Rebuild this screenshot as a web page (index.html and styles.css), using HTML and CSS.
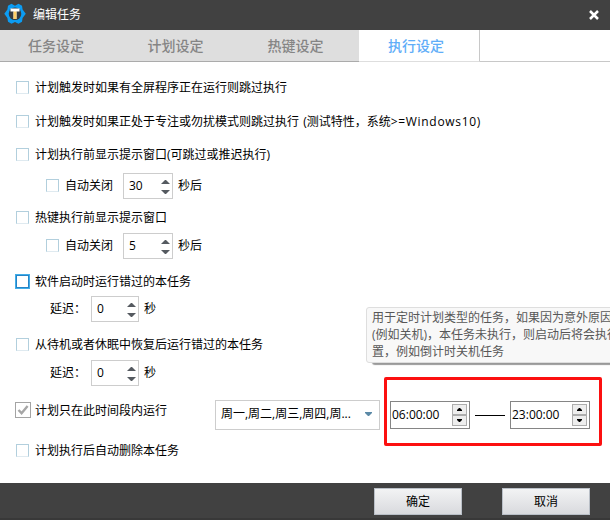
FILE: index.html
```html
<!DOCTYPE html>
<html lang="zh-CN">
<head>
<meta charset="utf-8">
<title>编辑任务</title>
<link rel="stylesheet" href="styles.css">
</head>
<body>
<div class="window">
  <header class="titlebar">
    <svg class="logo" width="22" height="22" viewBox="0 0 22 22">
      <path d="M11 2.8 L14.5 0.8 L18 2.8 L18.6 6.6 L21.8 10.7 L18.6 14.9 L18 18.7 L14.5 20.7 L11 19 L7.5 20.7 L4 18.7 L3.4 14.9 L0.3 10.7 L3.4 6.6 L4 2.8 L7.5 0.8Z" fill="#0c9cf2"/>
      <circle cx="11" cy="10.8" r="6.3" fill="#383b40"/>
      <path d="M6.5 5.5H15.5V8.5H12.5V16H9.5V8.5H6.5Z" fill="#fff"/>
      <path d="M9.5 8.5H12.5V16H9.5Z" fill="#ffce68"/>
    </svg>
    <h1>编辑任务</h1>
    <svg class="close" width="12" height="12" viewBox="0 0 12 12"><path d="M2 2L10 10M10 2L2 10" stroke="#fff" stroke-width="2.5"/></svg>
  </header>
  <nav class="tabs">
    <span class="tab first">任务设定</span><span class="tab">计划设定</span><span class="tab">热键设定</span><span class="tab active">执行设定</span>
  </nav>
  <main>
    <div class="row r1"><i class="box"></i><span>计划触发时如果有全屏程序正在运行则跳过执行</span></div>
    <div class="row r2"><i class="box"></i><span>计划触发时如果正处于专注或勿扰模式则跳过执行 <span class="note">(测试特性，系统<span class="version">&gt;=Windows10)</span></span></span></div>
    <div class="row r3"><i class="box"></i><span>计划执行前显示提示窗口(可跳过或推迟执行)</span></div>
    <div class="row sub r4"><i class="box"></i><span class="auto">自动关闭</span>
      <div class="spin"><span>30</span><svg width="9" height="16" viewBox="0 0 9 16"><path d="M0 5L4 1H5L9 5ZM0 11L4 15H5L9 11Z"/></svg></div><span>秒后</span></div>
    <div class="row r5"><i class="box"></i><span>热键执行前显示提示窗口</span></div>
    <div class="row sub r6"><i class="box"></i><span class="auto">自动关闭</span>
      <div class="spin"><span>5</span><svg width="9" height="16" viewBox="0 0 9 16"><path d="M0 5L4 1H5L9 5ZM0 11L4 15H5L9 11Z"/></svg></div><span>秒后</span></div>
    <div class="row r7"><i class="box focus"></i><span>软件启动时运行错过的本任务</span></div>
    <div class="row delay r8"><span class="lead">延迟：</span>
      <div class="spin small"><span>0</span><svg width="9" height="16" viewBox="0 0 9 16"><path d="M0 5L4 1H5L9 5ZM0 11L4 15H5L9 11Z"/></svg></div><span>秒</span></div>
    <div class="row r9"><i class="box"></i><span>从待机或者休眠中恢复后运行错过的本任务</span></div>
    <div class="row delay r10"><span class="lead">延迟：</span>
      <div class="spin small"><span>0</span><svg width="9" height="16" viewBox="0 0 9 16"><path d="M0 5L4 1H5L9 5ZM0 11L4 15H5L9 11Z"/></svg></div><span>秒</span></div>
    <div class="period">
      <div class="row period-label"><i class="box checked"><svg width="12" height="12" viewBox="0 0 12 12"><path d="M1.5 6L4.6 9.2L10.6 2" fill="none" stroke="#a6a6a6" stroke-width="2.4"/></svg></i><span>计划只在此时间段内运行</span></div>
      <div class="combo"><span>周一,周二,周三,周四,周...</span><svg width="7" height="4" viewBox="0 0 7 4"><path d="M0 0H7V1L4 4H3L0 1Z" fill="#5b89a6"/></svg></div>
      <div class="time"><span>06:00:00</span><div class="steps"><i><svg width="5" height="3" viewBox="0 0 5 3"><path d="M0 3V2L2 0H3L5 2V3Z"/></svg></i><i><svg width="5" height="3" viewBox="0 0 5 3"><path d="M0 0V1L2 3H3L5 1V0Z"/></svg></i></div></div>
      <div class="dash"></div>
      <div class="time"><span>23:00:00</span><div class="steps"><i><svg width="5" height="3" viewBox="0 0 5 3"><path d="M0 3V2L2 0H3L5 2V3Z"/></svg></i><i><svg width="5" height="3" viewBox="0 0 5 3"><path d="M0 0V1L2 3H3L5 1V0Z"/></svg></i></div></div>
    </div>
    <div class="row r12"><i class="box"></i><span>计划执行后自动删除本任务</span></div>
  </main>
  <footer><button>确定</button><button>取消</button></footer>
  <div class="tooltip">用于定时计划类型的任务，如果因为意外原因<br>(例如关机)，本任务未执行，则启动后将会执行<br>置，例如倒计时关机任务</div>
  <div class="highlight"></div>
</div>
</body>
</html>
```
FILE: styles.css
```css
* { box-sizing: border-box; }
body { margin: 0; font: 12px/18px "Open Sans", "Noto Sans CJK SC", sans-serif; color: #000; background: #fff; }
svg { display: block; flex: none; }
.window { position: relative; width: 610px; height: 520px; overflow: hidden; display: flex; flex-direction: column; white-space: nowrap; }
.titlebar { height: 30px; background: #414141; display: flex; align-items: center; padding: 0 10px 2px 4px; }
.titlebar h1 { margin: 1px 0 0 7px; font-size: 12px; font-weight: 400; color: #fff; }
.close { margin-left: auto; margin-top: 1px; }
.tabs { height: 32px; display: flex; border-bottom: 1px solid #c8c8c8; }
.tab { width: 120px; height: 32px; display: flex; align-items: center; justify-content: center; font-size: 14px; font-weight: 500; color: #858585; background: #dedede; border-bottom: 1px solid #ababab; padding-right: 7px; }
.tab.first { width: 119px; }
.tab.active { width: 121px; color: #60adf8; background: #fff; border-right: 1px solid #c8c8c8; border-bottom-color: #dedede; padding-right: 6px; }
main { flex: 1; padding-left: 16px; }
.row { height: 26px; display: flex; align-items: center; }
.r1 { margin-top: 13px; }
.r2 { margin-top: 8px; }
.r3 { margin-top: 7px; }
.r4 { margin-top: 5px; }
.r5 { margin-top: 6px; }
.r6 { margin-top: 2px; }
.r7 { margin-top: 10px; }
.r8 { margin-top: 1px; }
.r9 { margin-top: 10px; }
.r10 { margin-top: 2px; }
.r12 { margin-top: 8px; }
.sub { padding-left: 30px; }
.delay { padding-left: 34px; }
.note { margin-left: 1px; }
.version { letter-spacing: 0.7px; }
.box { flex: none; align-self: flex-start; width: 13px; height: 13px; margin: 6px 6px 0 0; border: 1px solid #b2cfdd; border-bottom-color: #dfeaf0; background: #fff; }
.box.focus { width: 15px; height: 15px; margin: 5px 5px 0 -1px; border: 1px solid #42aee8; box-shadow: inset 0 0 0 1px #2584c8; }
.box.checked { width: 16px; height: 16px; margin: 4px 4px 0 -1px; border: 1px solid #a4a4a4; padding: 1px; }
.auto { width: 58px; }
.lead { width: 41px; }
.spin { width: 50px; height: 26px; margin-right: 5px; padding: 1px 2px 0 5px; border: 1px solid #cdcdcd; display: flex; align-items: center; justify-content: space-between; fill: #555a60; }
.spin > span { margin-top: -1px; }
.spin.small { width: 48px; }
.period { margin-top: 12px; height: 32px; display: flex; align-items: flex-start; }
.period-label { width: 199px; }
.combo { width: 165px; height: 30px; margin: 2px 10px 0 0; padding: 0 7px 2px 5px; border: 1px solid #cdcdcd; display: flex; align-items: center; justify-content: space-between; }
.time { width: 80px; height: 28px; margin-top: 3px; padding: 0 2px 0 1px; border: 1px solid #858585; display: flex; align-items: center; justify-content: space-between; }
.steps { display: flex; flex-direction: column; background: #eee; }
.steps i { width: 15px; height: 11px; border: 1px solid #adadad; display: flex; align-items: center; justify-content: center; }
.dash { width: 30px; height: 1px; margin: 17px 5px 0; background: #000; }
footer { height: 37px; background: #414141; padding: 5px 20px 0; display: flex; justify-content: flex-end; gap: 40px; border-bottom: 2px solid #383838; }
button { width: 88px; height: 27px; padding: 0; border: 1px solid #b9bfc7; background: linear-gradient(#f2f3f4, #d9dade); font: inherit; color: #000; }
.tooltip { position: absolute; left: 366px; top: 307px; width: 260px; height: 56px; padding: 1px 5px; font-size: 12px; line-height: 17px; color: #575757; background: #f8f8f8; border: 1px solid #dedede; border-radius: 3px; box-shadow: 6px 2px 1px #999; }
.highlight { position: absolute; left: 384px; top: 377px; width: 218px; height: 69px; border: 3px solid #fc1010; border-radius: 2px; }
```
